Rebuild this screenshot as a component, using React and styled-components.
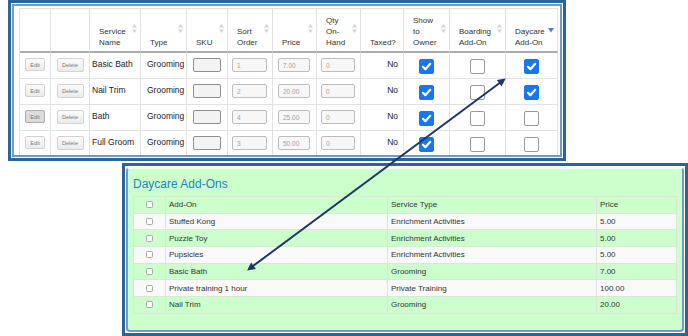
import React from 'react';
import styled, { createGlobalStyle } from 'styled-components';

const GlobalStyle = createGlobalStyle`
  html, body {
    margin: 0;
    padding: 0;
    background: #fff;
  }
  body {
    font-family: "Liberation Sans", Arial, sans-serif;
    color: #222;
  }
  * {
    box-sizing: border-box;
  }
`;

const Page = styled.div`
  position: relative;
  width: 688px;
  height: 336px;
  overflow: hidden;
`;

const Frame = styled.div`
  width: ${(p) => p.$w}px;
  height: ${(p) => p.$h}px;
  margin: ${(p) => p.$m};
  border: 3px solid #2a6599;
  padding: 1px;
  background: #fff;
`;

const Inner = styled.div`
  height: 100%;
  border: 2px solid #6c9cc9;
  border-top-color: ${(p) => p.$topColor || '#6c9cc9'};
  border-radius: ${(p) => p.$r || 0}px;
  background: ${(p) => p.$bg || '#fff'};
  padding: ${(p) => p.$pad};
  overflow: hidden;
`;

/* ---------- services table ---------- */

const ServiceGrid = styled.div`
  display: grid;
  grid-template-columns: 31px 39px 51px 46px 41px 45px 44px 44px 43px 46px 56px 52px;
  grid-template-rows: 44px repeat(4, 26px);
  width: max-content;
  border-left: 1px solid #e2e2e2;
  border-top: 1px solid #e2e2e2;
`;

const HeadCell = styled.div`
  display: flex;
  align-items: center;
  padding: 0 3px 3px 9px;
  border-right: 1px solid #e2e2e2;
  border-bottom: 2px solid #ababab;
  font-size: 8px;
  line-height: 11px;
  color: #333;
`;

const HeadText = styled.span`
  flex: 1;
  align-self: flex-end;
  white-space: pre-line;
`;

const SortMark = styled.svg`
  flex: none;
  margin-top: ${(p) => (p.$active ? 4 : 0)}px;
`;

const Cell = styled.div`
  display: flex;
  align-items: flex-start;
  justify-content: ${(p) => p.$justify || 'flex-start'};
  padding: ${(p) => p.$pt ?? 6}px ${(p) => p.$pr ?? 0}px 0 ${(p) => p.$pl ?? 0}px;
  border-right: 1px solid #e2e2e2;
  border-bottom: 1px solid #e2e2e2;
  font-size: 8.5px;
  line-height: 11px;
  color: #222;
`;

const SmallButton = styled.button`
  width: ${(p) => p.$w}px;
  height: ${(p) => p.$h}px;
  padding: 0;
  font: 5.5px "Liberation Sans", Arial, sans-serif;
  color: #777;
  background: ${(p) => (p.$pressed ? '#dcdcdc' : 'linear-gradient(#fcfcfc, #ebebeb)')};
  border: 1px solid ${(p) => (p.$pressed ? '#adadad' : '#d2d2d2')};
  border-radius: 2px;
`;

const FieldBox = styled.input`
  width: ${(p) => p.$w}px;
  height: 14px;
  padding: 0 0 0 4px;
  font: 6.5px "Liberation Sans", Arial, sans-serif;
  color: #a3a3a3;
  background: ${(p) => (p.$dark ? '#f3f3f3' : '#f7f7f7')};
  border: 1px solid ${(p) => (p.$dark ? '#8e8e8e' : '#bdbdbd')};
  border-radius: 2px;
  outline: none;
`;

const Tick = styled.span`
  display: inline-flex;
  align-items: center;
  justify-content: center;
  width: 15px;
  height: 15px;
  border-radius: 2px;
  background: ${(p) => (p.$on ? '#1976f2' : '#fff')};
  border: 1px solid ${(p) => (p.$on ? '#1976f2' : '#9a9a9a')};
`;

/* ---------- add-ons panel ---------- */

const Title = styled.h2`
  margin: 0 0 5px;
  font: normal 12px/14px "Liberation Sans", Arial, sans-serif;
  color: #1d87b4;
`;

const AddOnGrid = styled.div`
  display: grid;
  grid-template-columns: 32px 222px 209px 80px;
  grid-auto-rows: 16.67px;
  width: max-content;
  border-left: 1px solid #dbe5db;
  border-top: 1px solid #dbe5db;
`;

const AddOnCell = styled.div`
  display: flex;
  align-items: center;
  justify-content: ${(p) => (p.$center ? 'center' : 'flex-start')};
  padding-left: ${(p) => (p.$center ? 0 : 3)}px;
  border-right: 1px solid #dbe5db;
  border-bottom: 1px solid #dbe5db;
  background: ${(p) => (p.$odd ? '#f9f9f9' : 'transparent')};
  font-size: 8px;
  color: #333;
`;

const MiniBox = styled.span`
  width: 7px;
  height: 7px;
  border: 1px solid #a8a8a8;
  border-radius: 1.5px;
  background: #fff;
`;

const ArrowLayer = styled.svg`
  position: absolute;
  left: 0;
  top: 0;
  pointer-events: none;
`;

const headers = [
  { label: '' },
  { label: '' },
  { label: 'Service\nName', sort: true },
  { label: 'Type', sort: true },
  { label: 'SKU', sort: true },
  { label: 'Sort\nOrder', sort: true },
  { label: 'Price', sort: true },
  { label: 'Qty\nOn-\nHand', sort: true },
  { label: 'Taxed?' },
  { label: 'Show\nto\nOwner', sort: true },
  { label: 'Boarding\nAdd-On', sort: true },
  { label: 'Daycare\nAdd-On', active: true },
];

const services = [
  { name: 'Basic Bath', sort: '1', price: '7.00', owner: true, boarding: false, daycare: true },
  { name: 'Nail Trim', sort: '2', price: '20.00', owner: true, boarding: false, daycare: true },
  { name: 'Bath', sort: '4', price: '25.00', owner: true, boarding: false, daycare: false, pressed: true },
  { name: 'Full Groom', sort: '3', price: '50.00', owner: true, boarding: false, daycare: false },
];

const addOns = [
  { name: 'Stuffed Kong', type: 'Enrichment Activities', price: '5.00' },
  { name: 'Puzzle Toy', type: 'Enrichment Activities', price: '5.00' },
  { name: 'Pupsicles', type: 'Enrichment Activities', price: '5.00' },
  { name: 'Basic Bath', type: 'Grooming', price: '7.00' },
  { name: 'Private training 1 hour', type: 'Private Training', price: '100.00' },
  { name: 'Nail Trim', type: 'Grooming', price: '20.00' },
];

const SortIcon = ({ active }) =>
  active ? (
    <SortMark $active width="6" height="5" viewBox="0 0 6 5">
      <path d="M0 0H6L3 4.5z" fill="#5b79c9" />
    </SortMark>
  ) : (
    <SortMark width="5" height="9" viewBox="0 0 5 9">
      <path d="M2.5 0L5 3.5H0zM0 5.5H5L2.5 9z" fill="#d4d4d4" />
    </SortMark>
  );

const Check = ({ on }) => (
  <Tick $on={on}>
    {on && (
      <svg width="11" height="11" viewBox="0 0 11 11">
        <path d="M2 5.8L4.4 8.2L9.2 2.8" fill="none" stroke="#fff" strokeWidth="2.2" strokeLinecap="round" strokeLinejoin="round" />
      </svg>
    )}
  </Tick>
);

const App = () => (
  <Page>
    <GlobalStyle />

    <Frame $w={558} $h={161} $m="0 0 0 8px">
      <Inner $pad="2px 0 0 5px">
        <ServiceGrid>
          {headers.map((h, i) => (
            <HeadCell key={i}>
              <HeadText>{h.label}</HeadText>
              {(h.sort || h.active) && <SortIcon active={h.active} />}
            </HeadCell>
          ))}
          {services.map((s) => (
            <React.Fragment key={s.name}>
              <Cell $justify="center" $pt={5}>
                <SmallButton $w={20} $h={13} $pressed={s.pressed}>Edit</SmallButton>
              </Cell>
              <Cell $justify="center" $pt={5}>
                <SmallButton $w={27} $h={14}>Delete</SmallButton>
              </Cell>
              <Cell $pl={2}>{s.name}</Cell>
              <Cell $pl={6}>Grooming</Cell>
              <Cell $justify="center" $pt={5}>
                <FieldBox $w={28} $dark readOnly value="" />
              </Cell>
              <Cell $pl={4} $pt={5}>
                <FieldBox $w={35} readOnly value={s.sort} />
              </Cell>
              <Cell $pl={5} $pt={5}>
                <FieldBox $w={32} readOnly value={s.price} />
              </Cell>
              <Cell $pl={4} $pt={5}>
                <FieldBox $w={34} readOnly value="0" />
              </Cell>
              <Cell $justify="flex-end" $pr={5}>No</Cell>
              <Cell $justify="center" $pt={6}>
                <Check on={s.owner} />
              </Cell>
              <Cell $justify="center" $pt={6}>
                <Check on={s.boarding} />
              </Cell>
              <Cell $justify="center" $pt={6}>
                <Check on={s.daycare} />
              </Cell>
            </React.Fragment>
          ))}
        </ServiceGrid>
      </Inner>
    </Frame>

    <Frame $w={566} $h={173} $m="2px 0 0 122px">
      <Inner $r={4} $bg="#ccffcc" $topColor="#f4f8fb" $pad="8px 0 0 5px">
        <Title>Daycare Add-Ons</Title>
        <AddOnGrid>
          <AddOnCell $center>
            <MiniBox />
          </AddOnCell>
          <AddOnCell>Add-On</AddOnCell>
          <AddOnCell>Service Type</AddOnCell>
          <AddOnCell>Price</AddOnCell>
          {addOns.map((a, i) => (
            <React.Fragment key={a.name}>
              <AddOnCell $center $odd={i % 2 === 0}>
                <MiniBox />
              </AddOnCell>
              <AddOnCell $odd={i % 2 === 0}>{a.name}</AddOnCell>
              <AddOnCell $odd={i % 2 === 0}>{a.type}</AddOnCell>
              <AddOnCell $odd={i % 2 === 0}>{a.price}</AddOnCell>
            </React.Fragment>
          ))}
        </AddOnGrid>
      </Inner>
    </Frame>

    <ArrowLayer width="688" height="336" viewBox="0 0 688 336">
      <defs>
        <marker
          id="head"
          viewBox="0 0 10 10"
          refX="7"
          refY="5"
          markerWidth="10"
          markerHeight="8"
          markerUnits="userSpaceOnUse"
          orient="auto-start-reverse"
        >
          <path d="M0 0L10 5L0 10z" fill="#1f3763" />
        </marker>
      </defs>
      <line
        x1="249"
        y1="269"
        x2="503.7"
        y2="80"
        stroke="#1f3763"
        strokeWidth="2"
        markerStart="url(#head)"
        markerEnd="url(#head)"
      />
    </ArrowLayer>
  </Page>
);

export default App;
